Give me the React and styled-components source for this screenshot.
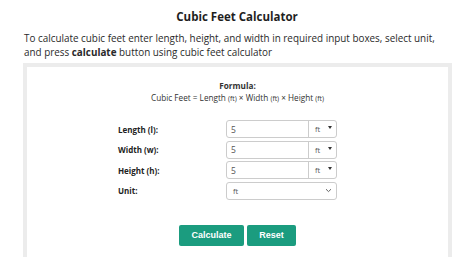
import React, { useState } from "react";
import styled, { createGlobalStyle } from "styled-components";

const GlobalStyle = createGlobalStyle`
  body {
    margin: 0;
    background: #fff;
    font-family: "Open Sans", "Noto Sans", sans-serif;
    color: #222;
  }
`;

const Page = styled.div`
  width: 474px;
  padding-top: 8px;
`;

const Title = styled.h1`
  margin: 0;
  text-align: center;
  font-size: 11.5px;
  font-weight: 700;
  line-height: 18px;
  color: #1f1f1f;
`;

const Intro = styled.p`
  margin: 6px 0 0 24px;
  width: 430px;
  font-size: 9.9px;
  line-height: 13.6px;
  color: #2a2a2a;
`;

const Panel = styled.div`
  margin: 4px 0 0 23px;
  width: 421px;
  height: 200px;
  border: 4px solid #ececec;
  padding-top: 13px;
`;

const Formula = styled.div`
  text-align: center;
  font-size: 8.2px;
  line-height: 12px;
  color: #333;
`;

const FormulaTitle = styled.div`
  font-weight: 700;
`;

const Small = styled.span`
  font-size: 6.8px;
`;

const Form = styled.div`
  display: grid;
  grid-template-columns: 108px 111px;
  row-gap: 2.5px;
  margin: 15px 0 0 91px;
`;

const Label = styled.label`
  font-size: 8px;
  font-weight: 700;
  display: flex;
  align-items: center;
  height: 18px;
  color: #222;
`;

const Field = styled.div`
  display: flex;
  height: 18px;
  box-sizing: border-box;
  border: 1px solid #ccc;
  border-radius: 3px;
  color: #555;
`;

const NumberInput = styled.input`
  width: 82px;
  box-sizing: border-box;
  border: none;
  border-right: 1px solid #ccc;
  padding: 0 4px;
  font-family: inherit;
  font-size: 8.5px;
  color: #555;
  outline: none;
  background: transparent;
`;

const UnitBox = styled.div`
  flex: 1;
  display: flex;
  align-items: center;
  justify-content: space-between;
  padding: 0 4px 0 6px;
  font-size: 7.5px;
`;

const Caret = styled.span`
  width: 0;
  height: 0;
  border-left: 2px solid transparent;
  border-right: 2px solid transparent;
  border-top: 3px solid #333;
  margin-top: -3px;
`;

const Buttons = styled.div`
  display: flex;
  justify-content: center;
  gap: 3px;
  margin-top: 25px;
`;

const Button = styled.button`
  height: 21px;
  width: ${(p) => p.w}px;
  border: none;
  border-radius: 2px;
  background: #1b9c7f;
  color: #fff;
  font-family: "Liberation Sans", Arial, sans-serif;
  font-weight: 700;
  font-size: 9px;
  padding: 0;
`;

const Chevron = () => (
  <svg width="7" height="5" viewBox="0 0 7 5">
    <path d="M1 1.2 L3.5 3.6 L6 1.2" fill="none" stroke="#555" strokeWidth="0.9" />
  </svg>
);

const rows = [
  { label: "Length (l):" },
  { label: "Width (w):" },
  { label: "Height (h):" },
];

export default function App() {
  const [vals] = useState(["5", "5", "5"]);
  return (
    <Page>
      <GlobalStyle />
      <Title>Cubic Feet Calculator</Title>
      <Intro>
        To calculate cubic feet enter length, height, and width in required
        input boxes, select unit, and press <b>calculate</b> button using cubic
        feet calculator
      </Intro>
      <Panel>
        <Formula>
          <FormulaTitle>Formula:</FormulaTitle>
          Cubic Feet = Length <Small>(ft)</Small> × Width <Small>(ft)</Small> ×
          Height <Small>(ft)</Small>
        </Formula>
        <Form>
          {rows.map((r, i) => (
            <React.Fragment key={r.label}>
              <Label>{r.label}</Label>
              <Field>
                <NumberInput defaultValue={vals[i]} />
                <UnitBox>
                  ft <Caret />
                </UnitBox>
              </Field>
            </React.Fragment>
          ))}
          <Label>Unit:</Label>
          <Field>
            <UnitBox>
              ft <Chevron />
            </UnitBox>
          </Field>
        </Form>
        <Buttons>
          <Button w={65}>Calculate</Button>
          <Button w={49}>Reset</Button>
        </Buttons>
      </Panel>
    </Page>
  );
}
